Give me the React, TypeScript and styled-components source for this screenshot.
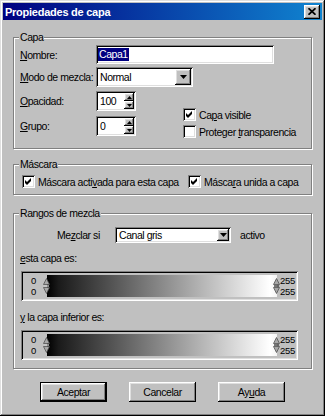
import React from 'react';
import styled, { createGlobalStyle, css } from 'styled-components';

const GlobalStyle = createGlobalStyle`
  html, body { margin: 0; padding: 0; background: #c0c0c0; }
  body { font-family: "Liberation Sans", Arial, sans-serif; }
  * { box-sizing: border-box; }
`;

const raised = css`
  box-shadow: inset -1px -1px 0 #000, inset 1px 1px 0 #fff, inset -2px -2px 0 #808080, inset 2px 2px 0 #dfdfdf;
`;

const sunken = css`
  box-shadow: inset 1px 1px 0 #808080, inset -1px -1px 0 #fff, inset 2px 2px 0 #000, inset -2px -2px 0 #dfdfdf;
`;

const Window = styled.div`
  width: 325px;
  height: 416px;
  padding: 3px;
  background: #c0c0c0;
  box-shadow: inset -1px -1px 0 #000, inset 1px 1px 0 #dfdfdf, inset -2px -2px 0 #808080, inset 2px 2px 0 #fff;
  display: flex;
  flex-direction: column;
  font-size: 10.5px;
  letter-spacing: -0.45px;
  color: #000;
`;

const TitleBar = styled.div`
  height: 17px;
  flex: none;
  display: flex;
  align-items: center;
  padding: 0 2px;
  background: linear-gradient(to right, #000080, #1084d0);
  color: #fff;
  font-weight: bold;
  font-size: 11px;
  letter-spacing: -0.25px;
`;

const TitleText = styled.span`
  flex: 1;
  white-space: nowrap;
`;

const CloseButton = styled.div`
  width: 16px;
  height: 14px;
  background: #c0c0c0;
  ${raised};
  display: flex;
  align-items: center;
  justify-content: center;
`;

const Content = styled.div`
  display: flex;
  flex-direction: column;
  padding: 11px 10px 0 10px;
`;

const Group = styled.fieldset<{ $mt?: number; $pt: number; $pb: number }>`
  margin: ${(p) => p.$mt ?? 0}px 0 0 0;
  padding: ${(p) => p.$pt}px 6px ${(p) => p.$pb}px 6px;
  border: 1px solid #808080;
  box-shadow: 1px 1px 0 #fff, inset 1px 1px 0 #fff;
  min-width: 0;
`;

const Legend = styled.legend`
  padding: 0 1px;
  margin-left: -1px;
  line-height: 12px;
  background: #c0c0c0;
`;

const Row = styled.div<{ $h: number; $mt?: number; $pl?: number }>`
  display: flex;
  align-items: center;
  height: ${(p) => p.$h}px;
  margin-top: ${(p) => p.$mt ?? 0}px;
  padding-left: ${(p) => p.$pl ?? 0}px;
  white-space: nowrap;
`;

const FieldLabel = styled.span<{ $w: number; $ml?: number }>`
  width: ${(p) => p.$w}px;
  margin-left: ${(p) => p.$ml ?? 0}px;
  flex: none;
  white-space: nowrap;
`;

const Key = styled.span`
  text-decoration: underline;
  text-underline-offset: 1px;
`;

const TextInput = styled.div<{ $w: number; $h: number }>`
  width: ${(p) => p.$w}px;
  height: ${(p) => p.$h}px;
  background: #fff;
  ${sunken};
  padding: 2px;
  display: flex;
  align-items: center;
`;

const Selected = styled.span`
  background: #000080;
  color: #fff;
  padding: 0 1px;
  line-height: 13px;
`;

const Combo = styled.div<{ $w: number; $h: number }>`
  width: ${(p) => p.$w}px;
  height: ${(p) => p.$h}px;
  background: #fff;
  ${sunken};
  padding: 2px;
  display: flex;
  align-items: center;
`;

const ComboText = styled.span`
  flex: 1;
  padding-left: 2px;
  white-space: nowrap;
`;

const ComboButton = styled.div<{ $w: number }>`
  width: ${(p) => p.$w}px;
  align-self: stretch;
  background: #c0c0c0;
  ${raised};
  display: flex;
  align-items: center;
  justify-content: center;
`;

const Spin = styled.div`
  width: 40px;
  height: 20px;
  background: #fff;
  ${sunken};
  padding: 2px;
  display: flex;
`;

const SpinText = styled.span`
  flex: 1;
  padding-left: 2px;
  display: flex;
  align-items: center;
`;

const SpinButtons = styled.div`
  width: 10px;
  display: flex;
  flex-direction: column;
`;

const SpinBtn = styled.div`
  flex: 1;
  background: #c0c0c0;
  ${raised};
  display: flex;
  align-items: center;
  justify-content: center;
`;

const Lower = styled.div`
  display: flex;
  margin-top: 4px;
`;

const Column = styled.div<{ $ml?: number; $pt?: number }>`
  display: flex;
  flex-direction: column;
  margin-left: ${(p) => p.$ml ?? 0}px;
  padding-top: ${(p) => p.$pt ?? 0}px;
`;

const CheckRow = styled.div<{ $w?: number; $ml?: number }>`
  display: flex;
  align-items: center;
  gap: 3px;
  height: 17px;
  white-space: nowrap;
  ${(p) => (p.$w ? `width: ${p.$w}px; flex: none;` : '')}
  margin-left: ${(p) => p.$ml ?? 0}px;
`;

const Box = styled.span`
  width: 13px;
  height: 13px;
  flex: none;
  background: #fff;
  ${sunken};
  display: flex;
  align-items: center;
  justify-content: center;
`;

const PlainText = styled.div<{ $mt: number }>`
  margin-top: ${(p) => p.$mt}px;
  line-height: 12px;
  white-space: nowrap;
`;

const RangeBox = styled.div<{ $mt: number }>`
  width: 277px;
  height: 30px;
  margin: ${(p) => p.$mt}px 0 0 1px;
  ${sunken};
  padding: 2px;
  display: flex;
`;

const RangeNums = styled.div<{ $side: 'left' | 'right' }>`
  display: flex;
  flex-direction: column;
  justify-content: center;
  gap: 1px;
  font-size: 9.5px;
  line-height: 9.5px;
  letter-spacing: -0.3px;
  flex: none;
  white-space: nowrap;
  width: ${(p) => (p.$side === 'left' ? 24 : 19)}px;
  text-align: ${(p) => (p.$side === 'left' ? 'right' : 'left')};
  padding: ${(p) => (p.$side === 'left' ? '0 11px 0 0' : '0 0 0 3px')};
`;

const Track = styled.div`
  flex: 1;
  position: relative;
  margin: 2px 0;
  background: linear-gradient(to right, #000 0%, #1a1a1a 5%, #fff 97%, #f4f4f4 100%);
`;

const Marker = styled.svg<{ $side: 'left' | 'right' }>`
  position: absolute;
  top: 3px;
  ${(p) => (p.$side === 'left' ? 'left: -4px;' : 'right: -3px;')}
`;

const ButtonRow = styled.div`
  display: flex;
  justify-content: center;
  gap: 22px;
  margin-top: 13px;
`;

const Btn = styled.button<{ $default?: boolean }>`
  width: 67px;
  height: 20px;
  padding: 0;
  background: #c0c0c0;
  border: ${(p) => (p.$default ? '1px solid #000' : 'none')};
  ${raised};
  font: inherit;
  letter-spacing: inherit;
  color: #000;
`;

const Arrow = ({ up }: { up?: boolean }) => (
  <svg width="7" height="4" viewBox="0 0 7 4">
    <polygon points={up ? '3.5,0 7,4 0,4' : '0,0 7,0 3.5,4'} fill="#000" />
  </svg>
);

const SmallArrow = ({ up }: { up?: boolean }) => (
  <svg width="5" height="3" viewBox="0 0 5 3">
    <polygon points={up ? '2.5,0 5,3 0,3' : '0,0 5,0 2.5,3'} fill="#000" />
  </svg>
);

const Check = () => (
  <svg width="7" height="7" viewBox="0 0 7 7">
    <polygon points="0,2 2,4 6,0 6,3 2,7 0,5" fill="#000" />
  </svg>
);

const Checkbox = ({ checked }: { checked?: boolean }) => <Box>{checked && <Check />}</Box>;

const MarkerIcon = ({ side }: { side: 'left' | 'right' }) => (
  <Marker $side={side} width="7" height="16" viewBox="0 0 7 16">
    <polygon points="3.5,0.5 6.5,6.5 0.5,6.5" fill="#a8a8a8" stroke="#505050" strokeWidth="0.8" />
    <polygon points="0.5,9.5 6.5,9.5 3.5,15.5" fill="#a8a8a8" stroke="#505050" strokeWidth="0.8" />
    <rect x="1" y="7.3" width="5" height="1.4" fill={side === 'right' ? '#404040' : '#c8c8c8'} />
  </Marker>
);

const SpinField = ({ value }: { value: string }) => (
  <Spin>
    <SpinText>{value}</SpinText>
    <SpinButtons>
      <SpinBtn>
        <SmallArrow up />
      </SpinBtn>
      <SpinBtn>
        <SmallArrow />
      </SpinBtn>
    </SpinButtons>
  </Spin>
);

const Range = ({ mt }: { mt: number }) => (
  <RangeBox $mt={mt}>
    <RangeNums $side="left">
      <span>0</span>
      <span>0</span>
    </RangeNums>
    <Track>
      <MarkerIcon side="left" />
      <MarkerIcon side="right" />
    </Track>
    <RangeNums $side="right">
      <span>255</span>
      <span>255</span>
    </RangeNums>
  </RangeBox>
);

export default function App() {
  return (
    <>
      <GlobalStyle />
      <Window>
        <TitleBar>
          <TitleText>Propiedades de capa</TitleText>
          <CloseButton>
            <svg width="8" height="7" viewBox="0 0 8 7">
              <path d="M0.5 0.2 L7.5 6.8 M7.5 0.2 L0.5 6.8" stroke="#000" strokeWidth="1.7" />
            </svg>
          </CloseButton>
        </TitleBar>
        <Content>
          <Group $pt={2} $pb={8}>
            <Legend>Capa</Legend>
            <Row $h={19}>
              <FieldLabel $w={76}>
                <Key>N</Key>ombre:
              </FieldLabel>
              <TextInput $w={178} $h={19}>
                <Selected>Capa1</Selected>
              </TextInput>
            </Row>
            <Row $h={20} $mt={3}>
              <FieldLabel $w={76}>
                <Key>M</Key>odo de mezcla:
              </FieldLabel>
              <Combo $w={97} $h={20}>
                <ComboText>Normal</ComboText>
                <ComboButton $w={16}>
                  <Arrow />
                </ComboButton>
              </Combo>
            </Row>
            <Lower>
              <Column>
                <Row $h={20}>
                  <FieldLabel $w={76}>
                    <Key>O</Key>pacidad:
                  </FieldLabel>
                  <SpinField value="100" />
                </Row>
                <Row $h={20} $mt={5}>
                  <FieldLabel $w={76}>
                    <Key>G</Key>rupo:
                  </FieldLabel>
                  <SpinField value="0" />
                </Row>
              </Column>
              <Column $ml={47} $pt={15}>
                <CheckRow>
                  <Checkbox checked />
                  <span>
                    Ca<Key>p</Key>a visible
                  </span>
                </CheckRow>
                <CheckRow>
                  <Checkbox />
                  <span>
                    Proteger <Key>t</Key>ransparencia
                  </span>
                </CheckRow>
              </Column>
            </Lower>
          </Group>

          <Group $mt={9} $pt={3} $pb={4}>
            <Legend>Máscara</Legend>
            <Row $h={17}>
              <CheckRow $w={166} $ml={2}>
                <Checkbox checked />
                <span>
                  Máscara acti<Key>v</Key>ada para esta capa
                </span>
              </CheckRow>
              <CheckRow>
                <Checkbox checked />
                <span>
                  Másca<Key>r</Key>a unida a capa
                </span>
              </CheckRow>
            </Row>
          </Group>

          <Group $mt={12} $pt={8} $pb={8}>
            <Legend>Rangos de mezcla</Legend>
            <Row $h={16} $pl={37}>
              <FieldLabel $w={58}>
                Me<Key>z</Key>clar si
              </FieldLabel>
              <Combo $w={116} $h={16}>
                <ComboText>Canal gris</ComboText>
                <ComboButton $w={12}>
                  <Arrow />
                </ComboButton>
              </Combo>
              <FieldLabel $w={40} $ml={9}>
                activo
              </FieldLabel>
            </Row>
            <PlainText $mt={9}>
              <Key>e</Key>sta capa es:
            </PlainText>
            <Range mt={7} />
            <PlainText $mt={10}>
              <Key>y</Key> la capa inferior es:
            </PlainText>
            <Range mt={7} />
          </Group>

          <ButtonRow>
            <Btn $default>Aceptar</Btn>
            <Btn>Cancelar</Btn>
            <Btn>
              Ay<Key>u</Key>da
            </Btn>
          </ButtonRow>
        </Content>
      </Window>
    </>
  );
}
